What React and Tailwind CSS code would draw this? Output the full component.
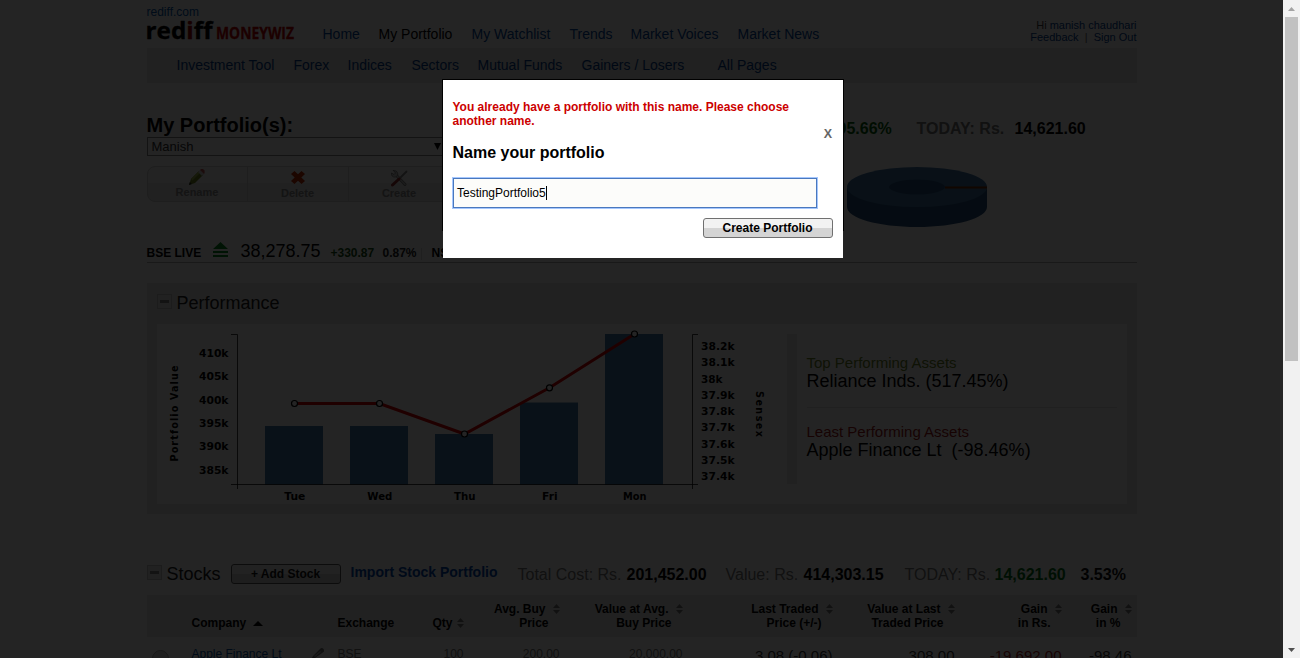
import React from "react";

const days = [
  { name: "Tue", x: 294.5, top: 426, line: 403.5, width: 21 },
  { name: "Wed", x: 379.5, top: 426, line: 403.5, width: 25 },
  { name: "Thu", x: 464.5, top: 434, line: 434, width: 21.5 },
  { name: "Fri", x: 549.5, top: 402.5, line: 387.8, width: 15.5 },
  { name: "Mon", x: 634.5, top: 334, line: 334, width: 23.5 },
];

const leftTicks = [
  ["410k", 357],
  ["405k", 380],
  ["400k", 404],
  ["395k", 427],
  ["390k", 450],
  ["385k", 474],
];

const rightTicks = [
  ["38.2k", 350],
  ["38.1k", 366],
  ["38k", 383],
  ["37.9k", 399],
  ["37.8k", 415],
  ["37.7k", 431],
  ["37.6k", 448],
  ["37.5k", 464],
  ["37.4k", 480],
];

const sortable = [
  ["Avg. Buy", "Price"],
  ["Value at Avg.", "Buy Price"],
  ["Last Traded", "Price (+/-)"],
  ["Value at Last", "Traded Price"],
  ["Gain", "in Rs."],
  ["Gain", "in %"],
];

function SortIcon() {
  return (
    <svg width="7" height="10" viewBox="0 0 7 10" fill="#7c7c7c">
      <path d="M3.500 0L7 4H0zM0 6h7L3.500 10z" />
    </svg>
  );
}

function Collapse() {
  return (
    <span className="flex h-[15px] w-[15px] items-center justify-center border border-[#c8c8c8] bg-[#e6e6e6]">
      <span className="h-[3px] w-[9px] bg-[#8a8a8a]" />
    </span>
  );
}

function Logo() {
  return (
    <svg width="150" height="28" viewBox="0 0 150 28" className="block overflow-visible">
      <g fontFamily="'Open Sans', sans-serif" fontWeight="700">
        <text x="-1.500" y="21" fontSize="22.500" textLength="67" lengthAdjust="spacingAndGlyphs" fill="#000" stroke="#000" strokeWidth=".3">
          red<tspan fill="#a00000" stroke="#a00000">i</tspan>ff
        </text>
        <text x="69" y="21" fontSize="15.500" textLength="78" lengthAdjust="spacingAndGlyphs" fill="#c80000" stroke="#c80000" strokeWidth=".3">
          MONEYWIZ
        </text>
      </g>
    </svg>
  );
}

function Header() {
  return (
    <>
      <div className="grid h-12 grid-cols-[176px_1fr_auto]">
        <div>
          <div className="h-[18px] pt-1.5 text-xs leading-[12px] text-[#0058b0]">rediff.com</div>
          <Logo />
        </div>
        <nav className="grid grid-cols-[56px_93px_98px_61px_107px_auto] pt-[26px] text-sm leading-4 text-[#0048a0]">
          <span>Home</span>
          <span className="text-black">My Portfolio</span>
          <span>My Watchlist</span>
          <span>Trends</span>
          <span>Market Voices</span>
          <span>Market News</span>
        </nav>
        <div className="pt-[19px] text-right text-[11px] leading-3 text-[#003e94]">
          <div>
            <span className="text-[#444]">Hi</span> manish chaudhari
          </div>
          <div className="whitespace-pre">
            Feedback<span className="text-[#666]">{"  |  "}</span>Sign Out
          </div>
        </div>
      </div>
      <nav className="grid h-[35px] grid-cols-[117px_54px_64px_66px_104px_136px_auto] bg-[#e6e6e6] pl-[30px] pt-[9px] text-sm leading-4 text-[#003e90]">
        <span>Investment Tool</span>
        <span>Forex</span>
        <span>Indices</span>
        <span>Sectors</span>
        <span>Mutual Funds</span>
        <span>Gainers / Losers</span>
        <span>All Pages</span>
      </nav>
    </>
  );
}

function Actions() {
  return (
    <div className="mt-[10px] grid h-[36px] w-[304px] grid-cols-[100px_101px_1fr] overflow-hidden rounded-lg border border-[#d0d0d0] bg-linear-to-b from-[#f6f6f6] from-45% to-[#e6e6e6] to-50% text-[11px] font-bold leading-3 text-[#8b8b8b]">
      <div className="flex flex-col items-center border-r border-[#d0d0d0] pt-[2px]">
        <svg width="18" height="17" viewBox="0 0 18 17">
          <path d="M1 16l2-6 8-8 4 4-8 8z" fill="#6f8a20" />
          <path d="M3 10l8-8 1.500 1.500-8 8z" fill="#a0b450" />
          <path d="M10 3l2-2 4 4-2 2z" fill="#d0d0d0" />
          <path d="M12 1l1-1h2l1.600 1.600V4L16 5z" fill="#c85858" />
          <path d="M1 16l.8-3 2 2z" fill="#222" />
        </svg>
        <span>Rename</span>
      </div>
      <div className="flex flex-col items-center border-r border-[#d0d0d0] pt-[4px]">
        <svg width="14" height="13" viewBox="0 0 14 13" className="mb-[3px]">
          <path d="M3.500 0L7 3.200 10.500 0 14 3 10.300 6.500 14 10l-3.500 3L7 9.800 3.500 13 0 10l3.700-3.500L0 3z" fill="#c22a00" />
        </svg>
        <span>Delete</span>
      </div>
      <div className="flex flex-col items-center pt-[2px]">
        <svg width="18" height="18" viewBox="0 0 18 18" fill="none" strokeLinecap="round">
          <path d="M6 6l9 9.500" stroke="#808080" strokeWidth="3" />
          <path d="M6 6l9 9.500" stroke="#c0c0c0" strokeWidth="1.500" />
          <path d="M3.500 1.500l2 2.500-1.500 1.500L1.500 4C1 7.500 4 9 6.500 7.500 9 5.500 7.500 1 3.500 1.500z" fill="#ccc" stroke="#777" strokeWidth=".8" />
          <path d="M16.500 2.500L10 9" stroke="#888" strokeWidth="1.800" />
          <path d="M9 10l-6.500 6" stroke="#982c2c" strokeWidth="3" />
        </svg>
        <span>Create</span>
      </div>
    </div>
  );
}

function Summary() {
  return (
    <div className="grid h-[180px] grid-cols-[304px_1fr]">
      <div>
        <div className="h-[54px] pt-[31px] text-xl font-bold leading-[22px]">My Portfolio(s):</div>
        <div className="flex h-[19px] w-[298px] items-center justify-between border border-[#888] pl-1 text-[13px] leading-4 text-[#333]">
          <span>Manish</span>
          <svg width="7" height="7" viewBox="0 0 7 7" className="mr-[3px]">
            <path d="M0 0h7L3.500 7z" fill="#000" />
          </svg>
        </div>
        <Actions />
        <div className="mt-[39px] grid h-[22px] grid-cols-[66px_28px_90px_52px_38px_11px_1fr] text-xs font-bold leading-[24px]">
          <span>BSE LIVE</span>
          <svg width="15" height="15" viewBox="0 0 15 15" fill="#058a1c" className="mt-px">
            <path d="M7.500 0L15 7H0zM0 9h15v2H0zM0 13h15v2H0z" />
          </svg>
          <span className="text-lg font-normal leading-[20px]">38,278.75</span>
          <span className="text-[#104f10]">+330.87</span>
          <span className="text-[#222]">0.87%</span>
          <span className="mt-[7px] h-[12px] w-px bg-[#d8d8d8]" />
          <span>NSE</span>
        </div>
      </div>
      <div className="pl-[341px]">
        <div className="mt-[36px] grid h-[20px] grid-cols-[125px_98px_auto] text-base font-bold leading-5">
          <span className="pl-[46px] text-[#005f08]">95.66%</span>
          <span className="text-[#777]">TODAY: Rs.</span>
          <span>14,621.60</span>
        </div>
        <svg width="142" height="64" viewBox="0 0 142 64" className="ml-[54px] mt-[27px] block">
          <path d="M1 22v19c0 11 31 20 70 20s70-9 70-20V22z" fill="#28527e" />
          <ellipse cx="71" cy="21" rx="70" ry="20" fill="#3f74a6" />
          <ellipse cx="71" cy="21" rx="28" ry="7.500" fill="#28527e" />
          <path d="M99 21.500h42" stroke="#7c3000" strokeWidth="2" />
        </svg>
      </div>
    </div>
  );
}

function Chart() {
  return (
    <svg width="630" height="180" viewBox="157 324 630 180" className="block shrink-0">
      {days.map((d) => (
        <rect key={d.name} x={d.x - 29.5} y={d.top} width="58" height={484.5 - d.top} fill="#427aac" />
      ))}
      <path
        d="M231 334.500h6.500V489M231 484.500h467M698 334.500h-5.500V489"
        fill="none"
        stroke="#000"
        strokeOpacity=".75"
      />
      <polyline
        points={days.map((d) => `${d.x},${d.line}`).join(" ")}
        fill="none"
        stroke="#dc0000"
        strokeWidth="3"
      />
      {days.map((d) => (
        <circle key={d.name} cx={d.x} cy={d.line} r="3" fill="#fff" stroke="#000" strokeWidth="1.200" />
      ))}
      <g fontFamily="'DejaVu Sans', sans-serif" fontWeight="700" fontSize="9.600" fill="#000">
        {leftTicks.map(([t, y]) => (
          <text key={t} x="199" y={y} textLength="29.500" lengthAdjust="spacingAndGlyphs">{t}</text>
        ))}
        {rightTicks.map(([t, y]) => (
          <text key={t} x="701" y={y} textLength={t.length === 3 ? 21.5 : 33.5} lengthAdjust="spacingAndGlyphs">{t}</text>
        ))}
        {days.map((d) => (
          <text key={d.name} x={d.x + 0.3} y="500" textAnchor="middle" textLength={d.width} lengthAdjust="spacingAndGlyphs">{d.name}</text>
        ))}
        <text x="178" y="461.500" textLength="96" transform="rotate(-90 178 461.500)">Portfolio Value</text>
        <text x="756" y="391" textLength="46" transform="rotate(90 756 391)">Sensex</text>
      </g>
    </svg>
  );
}

function Performance() {
  return (
    <section className="mt-5 h-[231px] bg-[#e9e9e9] px-[10px]">
      <div className="flex h-[41px] items-start gap-[5px] pt-[10px]">
        <div className="pt-px">
          <Collapse />
        </div>
        <h2 className="text-lg leading-5 text-[#222]">Performance</h2>
      </div>
      <div className="flex h-[180px] bg-white">
        <Chart />
        <div className="mt-[10px] h-[150px] w-[10px] bg-[#e9e9e9]" />
        <div className="ml-[10px] w-[310px] pt-[30px]">
          <div className="text-[15px] leading-[18px] text-[#6a8428]">Top Performing Assets</div>
          <div className="text-[18px] leading-[18px]">Reliance Inds. (517.45%)</div>
          <div className="mt-[17px] border-t border-[#e4e4e4]" />
          <div className="mt-[15px] text-[15px] leading-[18px] text-[#a01818]">Least Performing Assets</div>
          <div className="whitespace-pre text-[18px] leading-[18px]">{"Apple Finance Lt  (-98.46%)"}</div>
        </div>
      </div>
    </section>
  );
}

function Stocks() {
  return (
    <section className="mt-[49px]">
      <div className="grid h-8 grid-cols-[20px_64px_120px_167px_109px_99px_78px_101px_90px_86px_auto] text-base leading-[23px] text-[#777]">
        <div className="pt-[2px]">
          <Collapse />
        </div>
        <span className="text-lg leading-[22px] text-[#222]">Stocks</span>
        <button className="mt-px flex h-[20px] w-[110px] items-center justify-center rounded-[3px] border border-[#555] bg-linear-to-b from-[#f2f2f2] from-50% to-[#d4d4d4] to-50% text-xs font-bold text-[#111]">
          + Add Stock
        </button>
        <span className="text-[14px] font-bold leading-[18px] text-[#0048b0]">Import Stock Portfolio</span>
        <span>Total Cost: Rs.</span>
        <b className="text-black">201,452.00</b>
        <span>Value: Rs.</span>
        <b className="text-black">414,303.15</b>
        <span>TODAY: Rs.</span>
        <b className="text-[#007018]">14,621.60</b>
        <b className="text-[#111]">3.53%</b>
      </div>
      <div className="grid h-[42px] grid-cols-[45px_146px_79px_47px_96px_123px_150px_122px_107px_70px] items-start bg-[#e9e9e9] pt-[7px] text-right text-xs font-bold leading-[14px]">
        <span />
        <div className="flex items-center gap-[7px] pt-[14px]">
          Company
          <svg width="10" height="5" viewBox="0 0 10 5">
            <path d="M5 0l5 5H0z" />
          </svg>
        </div>
        <div className="pt-[14px] text-left">Exchange</div>
        <div className="flex items-center justify-end gap-1 pt-[14px]">
          Qty
          <SortIcon />
        </div>
        {sortable.map(([a, b]) => (
          <div key={a + b}>
            <div className="flex h-[14px] items-center justify-end gap-[7px]">
              {a}
              <SortIcon />
            </div>
            <div className="pr-[11px]">{b}</div>
          </div>
        ))}
      </div>
      <div className="grid h-8 grid-cols-[45px_116px_30px_79px_47px_96px_123px_150px_122px_107px_70px] pt-[10px] text-right text-xs leading-[14px] text-[#777]">
        <span className="ml-[5px] mt-[3px] h-[17px] w-[17px] rounded-full border border-[#aaa] bg-[#ddd]" />
        <span className="text-left text-[#0050a0]">Apple Finance Lt</span>
        <svg width="13" height="12" viewBox="0 0 13 12" className="ml-[3px] mt-px">
          <path d="M0 12l2-4 7-7q2-2 3.500 0t0 3L4 10z" fill="#777" />
          <path d="M3 8l6-5 1 1-6 5z" fill="#bbb" />
        </svg>
        <span className="text-left">BSE</span>
        <span>100</span>
        <span>200.00</span>
        <span>20,000.00</span>
        <span className="pt-[2px] text-[15px] text-[#333]">3.08 (-0.06)</span>
        <span className="pt-[2px] text-[15px] text-[#333]">308.00</span>
        <span className="pt-[2px] text-[15px] text-[#a82020]">-19,692.00</span>
        <span className="pt-[2px] text-[15px] text-[#333]">-98.46</span>
      </div>
    </section>
  );
}

function Dialog() {
  return (
    <div className="absolute left-[442px] top-[79px] h-[152px] w-[402px] border border-black">
      <div className="flex h-[178px] flex-col bg-white px-[10px] pt-5 text-black">
        <p className="-ml-[0.5px] text-xs font-bold leading-[14px] text-[#c00]">
          You already have a portfolio with this name. Please choose<br />another name.
        </p>
        <div className="flex h-[50px] justify-between">
          <h1 className="-ml-[0.5px] pt-4 text-base font-bold leading-[18px]">Name your portfolio</h1>
          <span className="pr-px text-[12.5px] font-bold leading-[13px] text-[#666]">X</span>
        </div>
        <div className="flex h-[30px] w-[364px] items-center border border-[#4a78bd] bg-[#fcfcfa] pb-px pl-[3px] text-xs outline-1 outline-[#a5c7fe]">
          TestingPortfolio5
          <span className="h-[14px] w-px bg-black" />
        </div>
        <button className="mt-[10px] flex h-[20px] w-[130px] items-center justify-center self-end rounded-[3px] border border-[#707070] bg-linear-to-b from-[#f2f2f2] from-50% to-[#d4d4d4] to-50% pr-px text-xs font-bold">
          Create Portfolio
        </button>
      </div>
    </div>
  );
}

function Scrollbar() {
  return (
    <div className="flex h-[658px] w-[17px] flex-col items-center bg-[#f1f1f1]">
      <svg width="17" height="17" viewBox="0 0 17 17" className="shrink-0">
        <path d="M5 11h7L8.500 7z" fill="#a3a3a3" />
      </svg>
      <div className="h-[344px] w-[13px] bg-[#c1c1c1]" />
      <svg width="17" height="17" viewBox="0 0 17 17" className="mt-auto shrink-0">
        <path d="M5 7h7L8.500 11z" fill="#505050" />
      </svg>
    </div>
  );
}

export default function App() {
  return (
    <div className="flex h-[658px] w-[1300px] overflow-hidden bg-white font-['Liberation_Sans',Arial,sans-serif] text-black">
      <main className="relative h-[658px] w-[1283px] overflow-hidden">
        <div className="ml-[146.5px] w-[990px] whitespace-nowrap">
          <Header />
          <Summary />
          <div className="-mt-px border-b border-[#b0b0b0]" />
          <Performance />
          <Stocks />
        </div>
        <div className="absolute inset-0 bg-black/86" />
        <Dialog />
      </main>
      <Scrollbar />
    </div>
  );
}
